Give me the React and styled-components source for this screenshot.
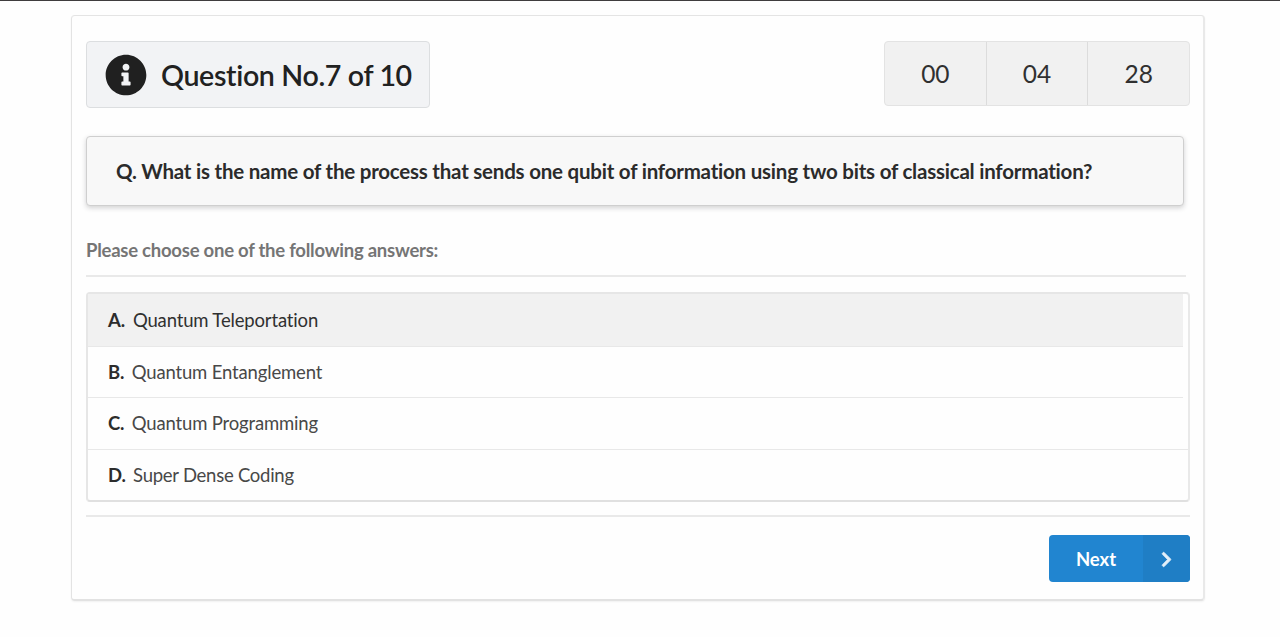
import React from "react";
import styled, { createGlobalStyle } from "styled-components";
import { FaInfoCircle, FaChevronRight } from "react-icons/fa";

const GlobalStyle = createGlobalStyle`
  *, *::before, *::after { box-sizing: border-box; }
  body {
    margin: 0;
    background: #fefefe;
    font-family: Lato, "Liberation Sans", sans-serif;
    font-variant-ligatures: none;
    color: #212121;
  }
`;

const Page = styled.main`
  height: 637px;
  border-top: 1px solid #3f3d3e;
  padding: 14px 75px 0 71px;
  overflow: hidden;
`;

const Card = styled.section`
  height: 586px;
  border: solid;
  border-width: 1px 2px 2px 1px;
  border-color: #e4e4e4 #e9e9e9 #e2e2e2 #e3e3e3;
  border-radius: 4px;
  box-shadow: 0 1px 2px rgba(34, 36, 38, 0.06);
  padding: 25px 13px 0 14px;
`;

const Header = styled.header`
  display: flex;
  justify-content: space-between;
  align-items: flex-start;
  height: 95px;
`;

const Title = styled.h1`
  display: flex;
  align-items: center;
  width: 344px;
  height: 67px;
  margin: 0;
  padding: 0 0 0 18px;
  gap: 14px;
  background: #f2f3f5;
  border: 1px solid #dcdee0;
  border-radius: 4px;
  font-size: 28.6px;
  font-weight: 600;
  letter-spacing: -0.36px;
  white-space: nowrap;

  svg { flex: none; color: #202020; }
`;

const Timer = styled.div`
  display: flex;
  width: 306px;
  height: 65px;
  background: #f1f1f1;
  border: 1px solid #e3e3e3;
  border-radius: 4px;
`;

const TimerCell = styled.div`
  flex: 1;
  display: flex;
  align-items: center;
  justify-content: center;
  font-size: 24.5px;
  color: #303030;

  & + & { border-left: 1px solid #dcdcdc; }
`;

const Question = styled.div`
  display: flex;
  align-items: center;
  width: 1098px;
  height: 70px;
  padding: 0 0 1px 29px;
  background: #f8f8f8;
  border: 1px solid #cfcfcf;
  border-radius: 4px;
  box-shadow: 0 2px 5px rgba(34, 36, 38, 0.2);
  font-size: 20.5px;
  font-weight: 700;
  letter-spacing: -0.22px;
  color: #2b2b2b;
  white-space: nowrap;
`;

const Prompt = styled.p`
  width: 1100px;
  height: 71px;
  margin: 0;
  padding-top: 32px;
  border-bottom: 2px solid #e9e9e9;
  font-size: 18.5px;
  line-height: 24px;
  font-weight: 700;
  letter-spacing: -0.24px;
  color: #757575;
`;

const Answers = styled.ul`
  list-style: none;
  height: 210px;
  margin: 15px 0 0;
  padding: 0;
  border: solid;
  border-width: 2px;
  border-color: #e6e6e6 #e9e9e9 #e0e0e0 #e6e6e6;
  border-radius: 4px;
`;

const Answer = styled.li`
  display: flex;
  align-items: center;
  width: ${(p) => (p.$full ? "100%" : "1095px")};
  height: ${(p) => (p.$active ? 52 : 51.4)}px;
  padding: 0 0 ${(p) => (p.$full ? 0 : 1)}px 20px;
  gap: ${(p) => (p.$active ? 8 : 7.5)}px;
  background: ${(p) => (p.$active ? "#f1f1f1" : "transparent")};
  border-top: 1px solid ${(p) => (p.$active ? "#f1f1f1" : "#e8e8e8")};
  font-size: 18.5px;
  letter-spacing: ${(p) => (p.$full ? -0.26 : -0.16)}px;
  color: ${(p) => (p.$active ? "#303030" : "#484848")};

  b { color: #2c2c2c; }
`;

const Footer = styled.footer`
  display: flex;
  justify-content: flex-end;
  margin-top: 13px;
  padding-top: 18px;
  border-top: 2px solid #e9e9e9;
`;

const NextButton = styled.button`
  display: flex;
  width: 141px;
  height: 47px;
  padding: 0;
  border: 0;
  border-radius: 4px;
  overflow: hidden;
  background: #2185d0;
  color: #fff;
  font: 700 18.5px Lato, "Liberation Sans", sans-serif;
`;

const ButtonPart = styled.span`
  display: flex;
  align-items: center;
  justify-content: center;
  width: ${(p) => p.$width}px;
  height: 100%;
  padding-top: 1px;
  background: ${(p) => (p.$shaded ? "#1f7ec5" : "transparent")};
  color: ${(p) => (p.$shaded ? "#e3eff9" : "#fff")};

  svg { stroke: currentColor; stroke-width: 20px; }
`;

const answers = [
  ["A", "Quantum Teleportation"],
  ["B", "Quantum Entanglement"],
  ["C", "Quantum Programming"],
  ["D", "Super Dense Coding"],
];

export default function App() {
  return (
    <>
      <GlobalStyle />
      <Page>
        <Card>
          <Header>
            <Title>
              <FaInfoCircle size={42} />
              Question No.7 of 10
            </Title>
            <Timer>
              {["00", "04", "28"].map((value) => (
                <TimerCell key={value}>{value}</TimerCell>
              ))}
            </Timer>
          </Header>
          <Question>
            Q. What is the name of the process that sends one qubit of information using two bits of classical information?
          </Question>
          <Prompt>Please choose one of the following answers:</Prompt>
          <Answers>
            {answers.map(([letter, text], i) => (
              <Answer key={letter} $active={i === 0} $full={i === 3}>
                <b>{letter}.</b>
                <span>{text}</span>
              </Answer>
            ))}
          </Answers>
          <Footer>
            <NextButton type="button">
              <ButtonPart $width={94}>Next</ButtonPart>
              <ButtonPart $width={47} $shaded>
                <FaChevronRight size={17} />
              </ButtonPart>
            </NextButton>
          </Footer>
        </Card>
      </Page>
    </>
  );
}
